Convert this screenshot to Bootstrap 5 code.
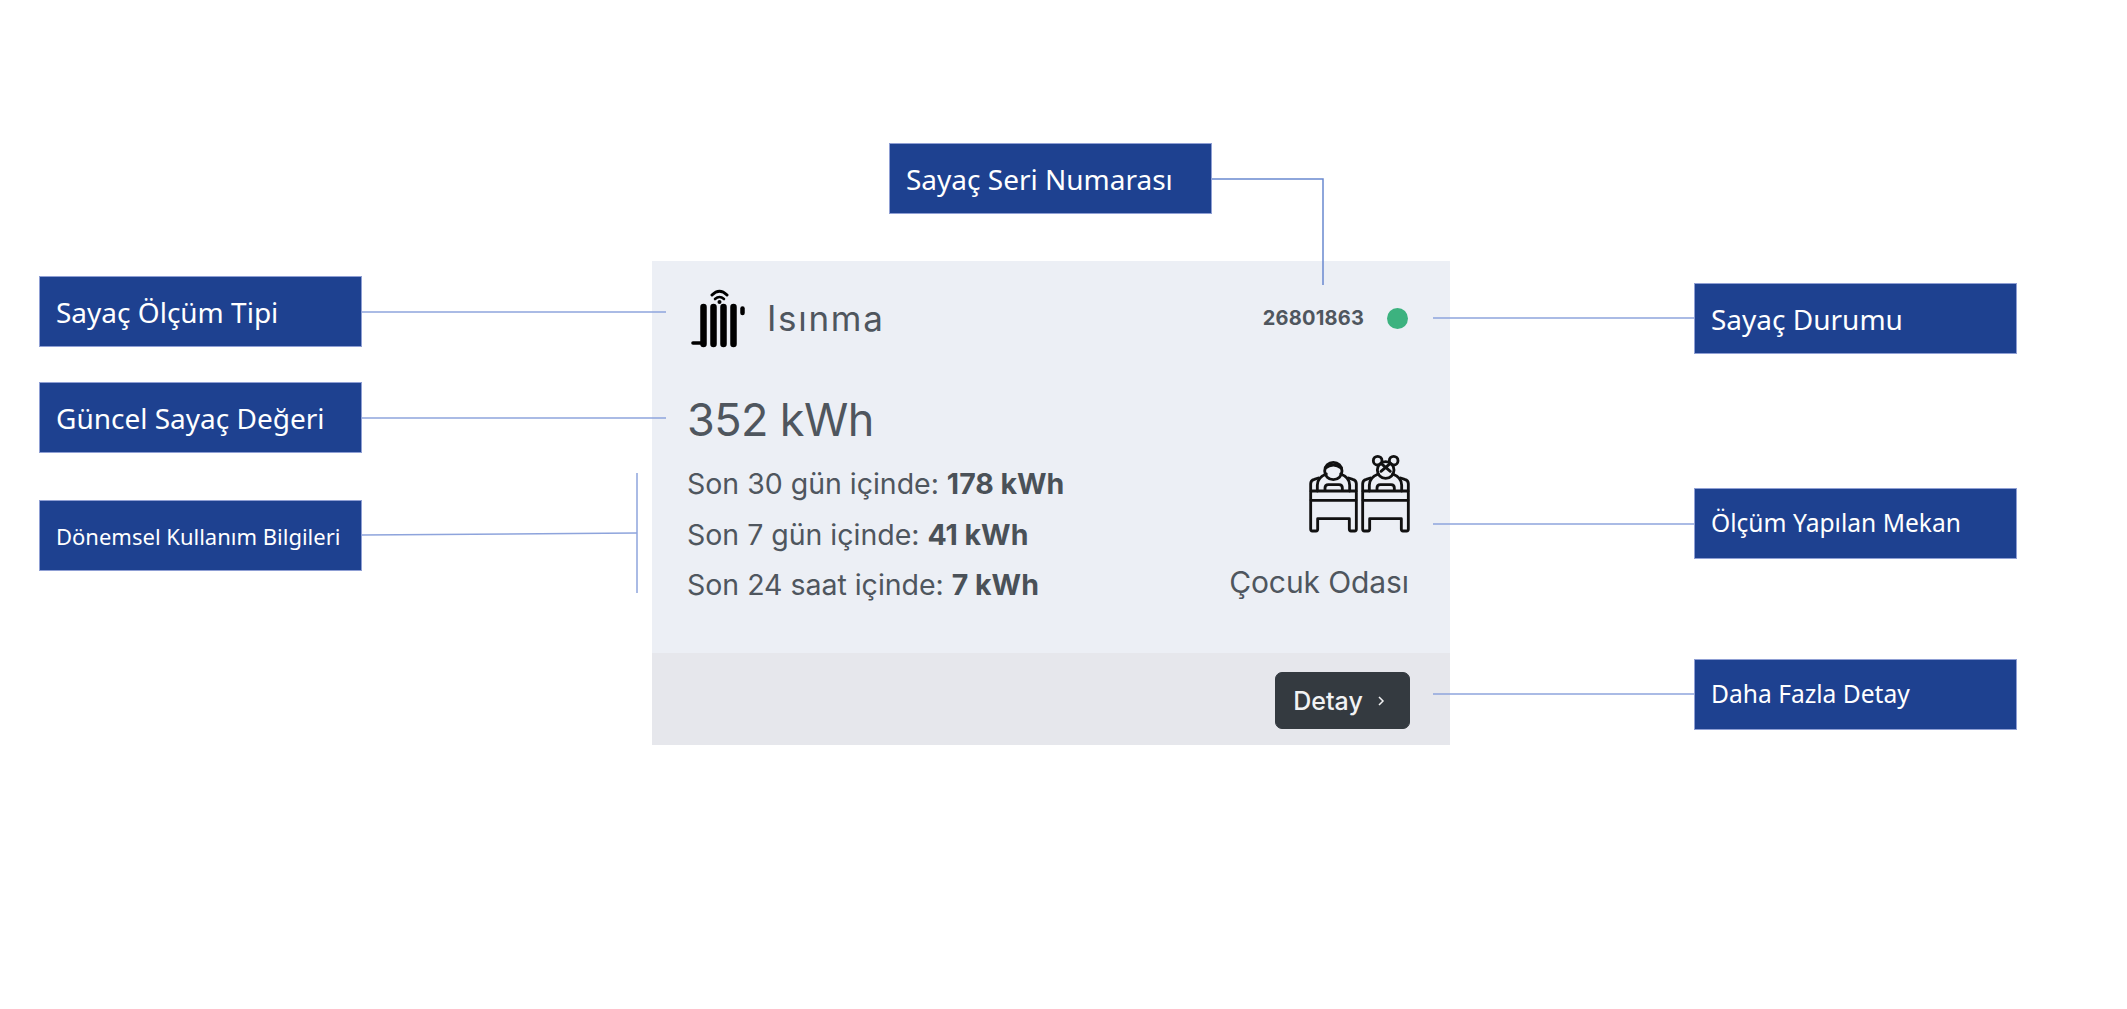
<!DOCTYPE html>
<html lang="tr">
<head>
<meta charset="utf-8">
<title>Sayaç</title>
<link href="https://cdn.jsdelivr.net/npm/bootstrap@5.3.0/dist/css/bootstrap.min.css" rel="stylesheet">
<style>
html,body{height:100%;background:#fff;overflow:hidden}
.canvas-area{position:relative;width:2127px;height:1009px;padding:261px 0 0 652px;font-family:"Inter",sans-serif}
.meter-card{width:798px;height:484px;background:#eceff5;border:0;border-radius:0;color:#4f565e}
.meter-main{padding:26px 42px 0 35px;flex:1 1 auto}
.meter-head{height:62px}
.radiator{width:56px;height:64px;margin-left:4px}
.meter-type{font-size:35px;line-height:40px;margin-left:20px;letter-spacing:1.7px}
.serial{font-size:20px;font-weight:700;line-height:24px;margin-right:23px;letter-spacing:.2px}
.status-dot{width:21px;height:21px;background:#3cb27f;border-radius:50%}
.meter-value{font-size:45px;line-height:56px;margin:43px 0 18px;letter-spacing:-.6px}
.meter-line{font-size:28.5px;line-height:36px;margin-bottom:14.5px;letter-spacing:-.02px}
.meter-line b{font-weight:700;color:#4a5158}
.room-col{padding-bottom:51px}
.beds{width:140px;height:90px;margin-right:-21px;margin-bottom:26px}
.room-name{font-size:30px;line-height:40px;letter-spacing:-.1px;margin-right:-1px}
.meter-foot{height:92px;background:#e6e7ec;padding-right:40px}
.detail-btn{width:135px;height:57px;background:#343a40;border-color:#343a40;color:#f1f2f3;font-size:25px;font-weight:500;line-height:28px;border-radius:7px;padding:0 6px 0 0;gap:13px;margin-top:3px}
.detail-btn svg{width:10px;height:12px}
.tag{position:absolute;height:71px;width:323px;background:#1e4190;border:1px solid #8f9fd4;color:#fff;font-family:"Noto Sans","Open Sans",sans-serif;padding-left:16px;font-size:28px;line-height:1}
.tag-sm{font-size:22px}
.tag-md{font-size:24.600px}
.tag-type{left:39px;top:276px}
.tag-value{left:39px;top:382px}
.tag-period{left:39px;top:500px}
.tag-serial{left:889px;top:143px}
.tag-status{left:1694px;top:283px}
.tag-place{left:1694px;top:488px}
.tag-more{left:1694px;top:659px}
.wires{position:absolute;left:0;top:0;width:2127px;height:1009px;pointer-events:none}
</style>
</head>
<body>
<main class="canvas-area">
  <section class="card meter-card">
    <div class="meter-main d-flex flex-column">
      <div class="meter-head d-flex align-items-center">
        <svg class="radiator" viewBox="692 286 56 64" aria-hidden="true">
          <g fill="none" stroke="#000" stroke-linecap="round">
            <path d="M704.500 307V344M714.500 307V344M724.500 307V344M734.500 307V344" stroke-width="6.500"/>
            <path d="M694 343H704" stroke-width="3.600"/>
            <path d="M743.500 308.500V313" stroke-width="4.500"/>
            <path d="M713 295Q720.500 287.500 728 295" stroke-width="3"/>
            <path d="M716 299Q720.500 295 725 299" stroke-width="2.600"/>
          </g>
          <circle cx="720.500" cy="302" r="2"/>
        </svg>
        <span class="meter-type">Isınma</span>
        <span class="serial ms-auto">26801863</span>
        <span class="status-dot"></span>
      </div>
      <div class="d-flex justify-content-between flex-grow-1">
        <div>
          <div class="meter-value">352 kWh</div>
          <div class="meter-line">Son 30 gün içinde: <b>178 kWh</b></div>
          <div class="meter-line">Son 7 gün içinde: <b>41 kWh</b></div>
          <div class="meter-line">Son 24 saat içinde: <b>7 kWh</b></div>
        </div>
        <div class="room-col d-flex flex-column align-items-end justify-content-end">
          <svg class="beds" viewBox="0 0 420 270" aria-hidden="true">
            <defs>
              <g id="bed-frame" fill="none" stroke="#111" stroke-width="8.500" stroke-linejoin="round" stroke-linecap="round">
                <path d="M65 135V113Q65 103 76 100L88 96"/>
                <path d="M202 135V113Q202 103 191 100L179 96"/>
                <path d="M85 135V118Q85 94 112 84M182 135V118Q182 94 155 84"/>
                <path d="M108 133V126Q108 116 118 116H150Q160 116 160 126V133"/>
                <rect x="65" y="135" width="137" height="28" rx="5"/>
                <path d="M65 163V250Q65 255 70 255H81Q86 255 86 250V218H181V250Q181 255 186 255H197Q202 255 202 250V163"/>
              </g>
            </defs>
            <use href="#bed-frame"/>
            <use href="#bed-frame" x="156"/>
            <g fill="none" stroke="#111" stroke-width="8.500" stroke-linecap="round">
              <circle cx="133" cy="75" r="26"/>
              <path d="M109 66Q133 48 157 66"/>
              <circle cx="290" cy="72" r="25"/>
              <circle cx="266" cy="44" r="13"/>
              <circle cx="314" cy="44" r="13"/>
              <path d="M276 52L304 76M304 52L276 76"/>
            </g>
          </svg>
          <div class="room-name">Çocuk Odası</div>
        </div>
      </div>
    </div>
    <div class="meter-foot d-flex align-items-center justify-content-end">
      <button type="button" class="btn detail-btn d-flex align-items-center justify-content-center">Detay
        <svg viewBox="0 0 10 12" aria-hidden="true"><path d="M3 2L7 6L3 10" fill="none" stroke="#f1f2f3" stroke-width="1.500"/></svg>
      </button>
    </div>
  </section>

  <svg class="wires" viewBox="0 0 2127 1009" aria-hidden="true">
    <g fill="none" stroke="#8ea4dc" stroke-width="1.500">
      <path d="M362 312H666"/>
      <path d="M362 418H666"/>
      <path d="M362 535L637 533"/>
      <path d="M637 473V593"/>
      <path d="M1433 318H1694"/>
      <path d="M1433 524H1694"/>
      <path d="M1433 694H1694"/>
      <path d="M1212 179H1323V285" stroke="#6a89d0"/>
    </g>
  </svg>

  <div class="tag d-flex align-items-center tag-type">Sayaç Ölçüm Tipi</div>
  <div class="tag d-flex align-items-center tag-value">Güncel Sayaç Değeri</div>
  <div class="tag d-flex align-items-center tag-period tag-sm">Dönemsel Kullanım Bilgileri</div>
  <div class="tag d-flex align-items-center tag-serial">Sayaç Seri Numarası</div>
  <div class="tag d-flex align-items-center tag-status">Sayaç Durumu</div>
  <div class="tag d-flex align-items-center tag-place tag-md">Ölçüm Yapılan Mekan</div>
  <div class="tag d-flex align-items-center tag-more tag-md">Daha Fazla Detay</div>
</main>
<script src="https://cdn.jsdelivr.net/npm/bootstrap@5.3.0/dist/js/bootstrap.bundle.min.js"></script>
</body>
</html>
